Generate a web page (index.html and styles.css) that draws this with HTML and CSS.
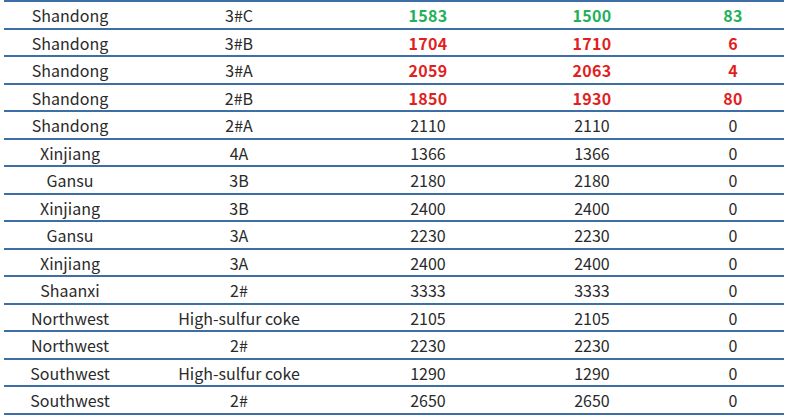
FILE: index.html
```html
<!DOCTYPE html>
<html>
<head>
<meta charset="utf-8">
<link rel="stylesheet" href="styles.css">
</head>
<body>
<div class="table">
  <div class="row up"><span>Shandong</span><span>3#C</span><span class="b">1583</span><span class="b">1500</span><span class="b last">83</span></div>
  <div class="row down"><span>Shandong</span><span>3#B</span><span class="b">1704</span><span class="b">1710</span><span class="b last">6</span></div>
  <div class="row down"><span>Shandong</span><span>3#A</span><span class="b">2059</span><span class="b">2063</span><span class="b last">4</span></div>
  <div class="row down"><span>Shandong</span><span>2#B</span><span class="b">1850</span><span class="b">1930</span><span class="b last">80</span></div>
  <div class="row"><span>Shandong</span><span>2#A</span><span>2110</span><span>2110</span><span class="last">0</span></div>
  <div class="row"><span>Xinjiang</span><span>4A</span><span>1366</span><span>1366</span><span class="last">0</span></div>
  <div class="row"><span>Gansu</span><span>3B</span><span>2180</span><span>2180</span><span class="last">0</span></div>
  <div class="row"><span>Xinjiang</span><span>3B</span><span>2400</span><span>2400</span><span class="last">0</span></div>
  <div class="row"><span>Gansu</span><span>3A</span><span>2230</span><span>2230</span><span class="last">0</span></div>
  <div class="row"><span>Xinjiang</span><span>3A</span><span>2400</span><span>2400</span><span class="last">0</span></div>
  <div class="row"><span>Shaanxi</span><span>2#</span><span>3333</span><span>3333</span><span class="last">0</span></div>
  <div class="row"><span>Northwest</span><span>High-sulfur coke</span><span>2105</span><span>2105</span><span class="last">0</span></div>
  <div class="row"><span>Northwest</span><span>2#</span><span>2230</span><span>2230</span><span class="last">0</span></div>
  <div class="row"><span>Southwest</span><span>High-sulfur coke</span><span>1290</span><span>1290</span><span class="last">0</span></div>
  <div class="row"><span>Southwest</span><span>2#</span><span>2650</span><span>2650</span><span class="last">0</span></div>
</div>
</body>
</html>
```
FILE: styles.css
```css
html, body {
  margin: 0;
  padding: 0;
  background: #ffffff;
}
body {
  font-family: "Noto Sans CJK SC", "Noto Sans", sans-serif;
  font-size: 16px;
  color: #2a2a2a;
}
.table {
  margin-left: 4px;
  width: 780px;
  border-top: 2px solid #3d6fa6;
}
.row {
  display: grid;
  grid-template-columns: 132px 206px 172px 156px 114px;
  height: 25.5px;
  border-bottom: 2px solid #3d6fa6;
  align-items: center;
  text-align: center;
  line-height: 1;
}
.row span {
  white-space: nowrap;
  padding-top: 1px;
}
.row .last {
  padding-left: 12px;
}
.b {
  font-weight: bold;
  letter-spacing: 0.3px;
}
.up .b {
  color: #22b05a;
}
.down .b {
  color: #e21f1f;
}
```
